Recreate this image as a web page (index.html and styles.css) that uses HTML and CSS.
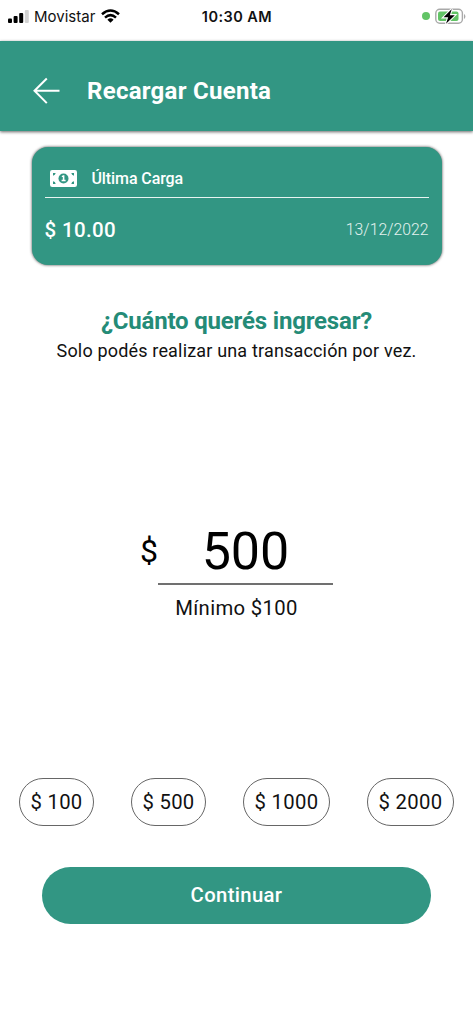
FILE: index.html
```html
<!DOCTYPE html>
<html lang="es">
<head>
<meta charset="utf-8">
<meta name="viewport" content="width=device-width, initial-scale=1">
<title>Recargar Cuenta</title>
<link rel="stylesheet" href="styles.css">
</head>
<body>
<div class="status">
  <div class="carrier">
    <svg class="signal" width="21" height="13" viewBox="0 0 21 13"><rect x="0" y="8.5" width="4" height="4.5" rx="1"/><rect x="5.6" y="6" width="4" height="7" rx="1"/><rect x="11.2" y="3" width="4" height="10" rx="1"/><rect x="16.8" y="0" width="4" height="13" rx="1" fill="#d2d2d2"/></svg>
    <span class="carrier-name">Movistar</span>
    <svg class="wifi" width="19" height="14" viewBox="0 0 19 14"><g fill="none" stroke="#000" stroke-width="2.5"><path d="M1 5.3Q9.5-2.3 18 5.3"/><path d="M4 8.6Q9.5 3.6 15 8.6"/></g><path d="M6.4 10.7Q9.5 8 12.6 10.7L9.5 13.8Z"/></svg>
  </div>
  <span class="time">10:30 AM</span>
  <div class="power">
    <span class="dot"></span>
    <svg width="31" height="17" viewBox="0 0 31 17"><rect x=".8" y="1.3" width="26.6" height="14" rx="4" fill="#fff" stroke="#a9a9a9" stroke-width="1.4"/><rect x="3" y="3.5" width="20.5" height="9.6" rx="2" fill="#62c466"/><path d="M29 6v5q1.4-.8 1.4-2.5T29 6Z" fill="#a9a9a9"/><path d="M16.8 1L8.6 9.3h4.6L11 15.8l8.8-8.6h-5Z" stroke="#fff" stroke-width="2.2" paint-order="stroke"/></svg>
  </div>
</div>
<header class="bar">
  <svg class="back" width="28" height="28" viewBox="0 0 28 28" fill="none" stroke="#fff" stroke-width="2"><path d="M26.5 13.8H1.5M13.8 1.5L1.5 13.8l12.3 12.3"/></svg>
  <h1 class="title">Recargar Cuenta</h1>
</header>
<main class="content">
  <section class="card">
    <div class="card-head">
      <svg width="27" height="17" viewBox="0 0 27 17"><rect width="27" height="17" rx="2.2" fill="#fff"/><g fill="#329683"><circle cx="13.5" cy="8.5" r="5"/><path d="M3 3h2.7Q5.4 5.4 3 5.7ZM24 3h-2.7Q21.6 5.4 24 5.7ZM3 14h2.7Q5.4 11.6 3 11.3ZM24 14h-2.7Q21.6 11.6 24 11.3Z"/></g><path d="M11.8 6l1.3-.8h1.3v4.6h1.2v1.5h-4V9.8h1.2V6.9h-1Z" fill="#fff"/></svg>
      <span class="card-title">Última Carga</span>
    </div>
    <div class="card-row">
      <span class="amount">$ 10.00</span>
      <span class="date">13/12/2022</span>
    </div>
  </section>
  <h2 class="question">¿Cuánto querés ingresar?</h2>
  <p class="hint">Solo podés realizar una transacción por vez.</p>
  <div class="entry">
    <span class="currency">$</span>
    <div class="value">500</div>
  </div>
  <p class="minimum">Mínimo $100</p>
  <div class="chips">
    <button class="chip">$ 100</button>
    <button class="chip">$ 500</button>
    <button class="chip wide">$ 1000</button>
    <button class="chip wide">$ 2000</button>
  </div>
  <button class="continue">Continuar</button>
</main>
</body>
</html>
```
FILE: styles.css
```css
* { box-sizing: border-box; }
body { margin: 0; height: 1024px; overflow: hidden; background: #fff; color: #111; font-family: Roboto, sans-serif; }
h1, h2, p { margin: 0; white-space: nowrap; }
svg { display: block; flex: none; }
button { font-family: inherit; padding: 0; white-space: nowrap; }
.status { display: grid; grid-template-columns: 1fr auto 1fr; align-items: center; height: 41px; padding: 0 7px 9px 8px; font-family: Inter, sans-serif; color: #111; }
.carrier { display: flex; align-items: center; }
.carrier-name { margin-left: 5px; padding-top: 1px; font-size: 15px; line-height: 20px; }
.wifi { margin-left: 6px; }
.time { font-size: 14.5px; font-weight: 600; line-height: 20px; letter-spacing: .45px; padding-top: 1px; }
.power { display: flex; justify-content: flex-end; align-items: center; gap: 5px; }
.dot { width: 8px; height: 8px; border-radius: 50%; background: #62c466; }
.bar { display: flex; align-items: center; height: 90px; padding: 10px 0 0 32.5px; background: #329683; box-shadow: 0 1px 3px rgba(0,0,0,.6); }
.title { margin-left: 26.5px; font-size: 24px; font-weight: 700; line-height: 30px; letter-spacing: .27px; color: #fff; }
.content { display: flex; flex-direction: column; align-items: center; }
.card { width: 410px; height: 118px; margin-top: 16px; padding: 0 13px; border-radius: 16px; background: #329683; box-shadow: 0 0 3px rgba(0,0,0,.75); color: #fff; }
.card-head { display: flex; align-items: center; height: 51px; padding: 13px 0 0 5px; border-bottom: 1.5px solid #e8f4f1; }
.card-title { margin-left: 15px; font-size: 16px; font-weight: 500; letter-spacing: -.1px; }
.card-row { display: flex; align-items: center; justify-content: space-between; height: 63px; }
.amount { font-size: 20.5px; font-weight: 500; letter-spacing: .35px; }
.date { font-size: 15.8px; font-weight: 300; color: #e4f2ef; }
.question { margin-top: 41px; font-size: 24px; font-weight: 700; line-height: 30px; letter-spacing: -.18px; color: #248b77; }
.hint { margin-top: 2px; font-size: 18px; line-height: 26px; letter-spacing: .17px; }
.entry { display: flex; width: 193px; height: 75px; margin-top: 146px; }
.currency { width: 18px; font-size: 32px; line-height: 83px; color: #000; }
.value { width: 176px; padding-top: 3px; font-size: 52px; line-height: 77px; text-align: center; color: #000; border-bottom: 2px solid #707070; }
.minimum { margin-top: 10px; font-size: 20.3px; line-height: 26px; letter-spacing: .35px; }
.chips { display: flex; justify-content: space-between; width: 435px; margin-top: 156.5px; }
.chip { width: 75px; height: 48px; border: 1px solid #666; border-radius: 24px; background: #fff; color: #111; font-size: 20.3px; letter-spacing: .3px; }
.wide { width: 87px; }
.continue { width: 389px; height: 57px; margin-top: 41px; border: 0; border-radius: 29px; background: #329683; color: #fff; font-size: 20.3px; font-weight: 500; letter-spacing: .35px; }
```
